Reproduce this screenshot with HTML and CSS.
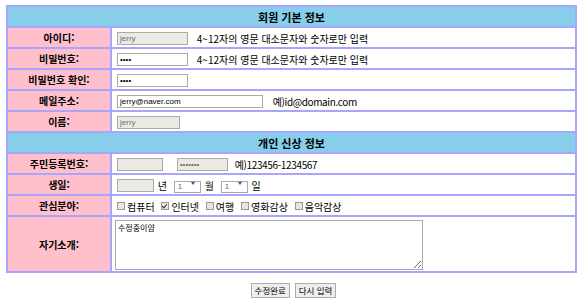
FILE: index.html
```html
<!DOCTYPE html>
<html lang="ko">
<head>
  <meta charset="UTF-8" />
  <title>회원정보 수정</title>
  <link rel="stylesheet" href="styles.css">
</head>
<body>
  <form class="member-form">
    <table class="form-table">
      <tr>
        <th colspan="2" class="section">회원 기본 정보</th>
      </tr>
      <tr>
        <td class="label">아이디:</td>
        <td class="field">
          <input type="text" class="box readonly w-id" value="jerry" readonly>
          <span class="hint">4~12자의 영문 대소문자와 숫자로만 입력</span>
        </td>
      </tr>
      <tr>
        <td class="label">비밀번호:</td>
        <td class="field">
          <input type="password" class="box w-id" value="1234">
          <span class="hint">4~12자의 영문 대소문자와 숫자로만 입력</span>
        </td>
      </tr>
      <tr>
        <td class="label">비밀번호 확인:</td>
        <td class="field">
          <input type="password" class="box w-id" value="1234">
        </td>
      </tr>
      <tr>
        <td class="label">메일주소:</td>
        <td class="field">
          <input type="text" class="box w-mail" value="jerry@naver.com">
          <span class="hint mail-hint">예)id@domain.com</span>
        </td>
      </tr>
      <tr>
        <td class="label">이름:</td>
        <td class="field">
          <input type="text" class="box readonly w-name" value="jerry" readonly>
        </td>
      </tr>
      <tr>
        <th colspan="2" class="section">개인 신상 정보</th>
      </tr>
      <tr>
        <td class="label">주민등록번호:</td>
        <td class="field">
          <input type="text" class="box readonly w-jumin1" readonly>
          <input type="password" class="box readonly w-jumin2" value="1234567" readonly>
          <span class="hint jumin-hint">예)123456-1234567</span>
        </td>
      </tr>
      <tr>
        <td class="label">생일:</td>
        <td class="field">
          <input type="text" class="box readonly w-year" readonly>
          <span class="unit">년</span>
          <span class="select-wrap"><select class="select"><option>1</option></select></span>
          <span class="unit">월</span>
          <span class="select-wrap"><select class="select"><option>1</option></select></span>
          <span class="unit">일</span>
        </td>
      </tr>
      <tr>
        <td class="label">관심분야:</td>
        <td class="field">
          <label class="check"><input type="checkbox">컴퓨터</label>
          <label class="check"><input type="checkbox" checked>인터넷</label>
          <label class="check"><input type="checkbox">여행</label>
          <label class="check"><input type="checkbox">영화감상</label>
          <label class="check"><input type="checkbox">음악감상</label>
        </td>
      </tr>
      <tr class="intro-row">
        <td class="label">자기소개:</td>
        <td class="field">
          <textarea class="intro">수정중이얌</textarea>
        </td>
      </tr>
    </table>

    <div class="buttons">
      <button type="submit" class="btn">수정완료</button>
      <button type="reset" class="btn">다시 입력</button>
    </div>
  </form>
</body>
</html>
```

FILE: styles.css
```css
* {
  box-sizing: border-box;
}
body {
  margin: 5px 0 0 6px;
  font-family: "Noto Sans CJK KR", "Noto Sans", sans-serif;
  font-size: 10px;
  color: #000;
  background: #fff;
}
.form-table {
  width: 571px;
  border: 1px solid #a6a6ff;
  border-spacing: 0;
}
.form-table th,
.form-table td {
  border: 1px solid #a6a6ff;
  height: 21px;
  padding: 0;
}
.section {
  background: #87ceeb;
  font-size: 11px;
  font-weight: bold;
  text-align: center;
}
.label {
  width: 104px;
  background: #ffc0cb;
  font-weight: bold;
  text-align: center;
}
.field {
  background: #fff;
  padding-left: 5px !important;
  white-space: nowrap;
}
.field > * {
  vertical-align: middle;
}
.box {
  height: 13px;
  margin: 0;
  padding: 0 2px;
  border: 1px solid #a9a9a9;
  background: #fff;
  font-family: "Liberation Sans", sans-serif;
  font-size: 8px;
  color: #000;
}
.box.readonly {
  background: #ebebe4;
  color: #6d6d6d;
}
.w-id { width: 71px; }
.w-mail { width: 146px; }
.w-name { width: 63px; }
.w-jumin1 { width: 46px; }
.w-jumin2 { width: 51px; margin-left: 11px; }
.w-year { width: 37px; }
.hint {
  margin-left: 6px;
}
.mail-hint { margin-left: 7px; letter-spacing: -0.4px; }
.jumin-hint { margin-left: 4px; letter-spacing: -0.35px; }
.unit {
  margin: 0 4px 0 1px;
}
.select-wrap {
  position: relative;
  display: inline-block;
}
.select {
  appearance: none;
  -webkit-appearance: none;
  width: 27px;
  height: 12px;
  margin: 0;
  padding: 0 0 0 3px;
  border: 1px solid #a9a9a9;
  border-radius: 0;
  background: #fff;
  font-family: "Liberation Sans", sans-serif;
  font-size: 8px;
  line-height: 10px;
  color: #666;
}
.select-wrap::after {
  content: "";
  position: absolute;
  right: 6px;
  top: 5px;
  border-left: 2.5px solid transparent;
  border-right: 2.5px solid transparent;
  border-top: 3px solid #555;
  pointer-events: none;
}
.check {
  display: inline-flex;
  align-items: center;
  margin-right: 4px;
}
.check input {
  appearance: none;
  -webkit-appearance: none;
  width: 8px;
  height: 8px;
  margin: 0 2px 0 0;
  border: 1px solid #9a9a9a;
  background: #e6e6e6;
  position: relative;
}
.check input:checked::after {
  content: "";
  position: absolute;
  left: 1px;
  top: 0;
  width: 2px;
  height: 4px;
  border: solid #333;
  border-width: 0 1px 1px 0;
  transform: rotate(40deg);
}
.intro-row td {
  height: 56px;
}
.field .intro {
  width: 308px;
  height: 50px;
  margin: 1px 0 0 -2px;
  padding: 1px 2px;
  border: 1px solid #a9a9a9;
  font-family: "Noto Sans CJK KR", sans-serif;
  font-size: 8px;
  vertical-align: top;
  resize: both;
}
.buttons {
  margin-top: 9px;
  text-align: center;
}
.btn {
  height: 15px;
  margin: 0 1px;
  padding: 0 3px;
  border: 1px solid #adadad;
  background: #eee;
  font-family: "Noto Sans CJK KR", sans-serif;
  font-size: 8.5px;
  line-height: 12px;
  color: #000;
}
```
